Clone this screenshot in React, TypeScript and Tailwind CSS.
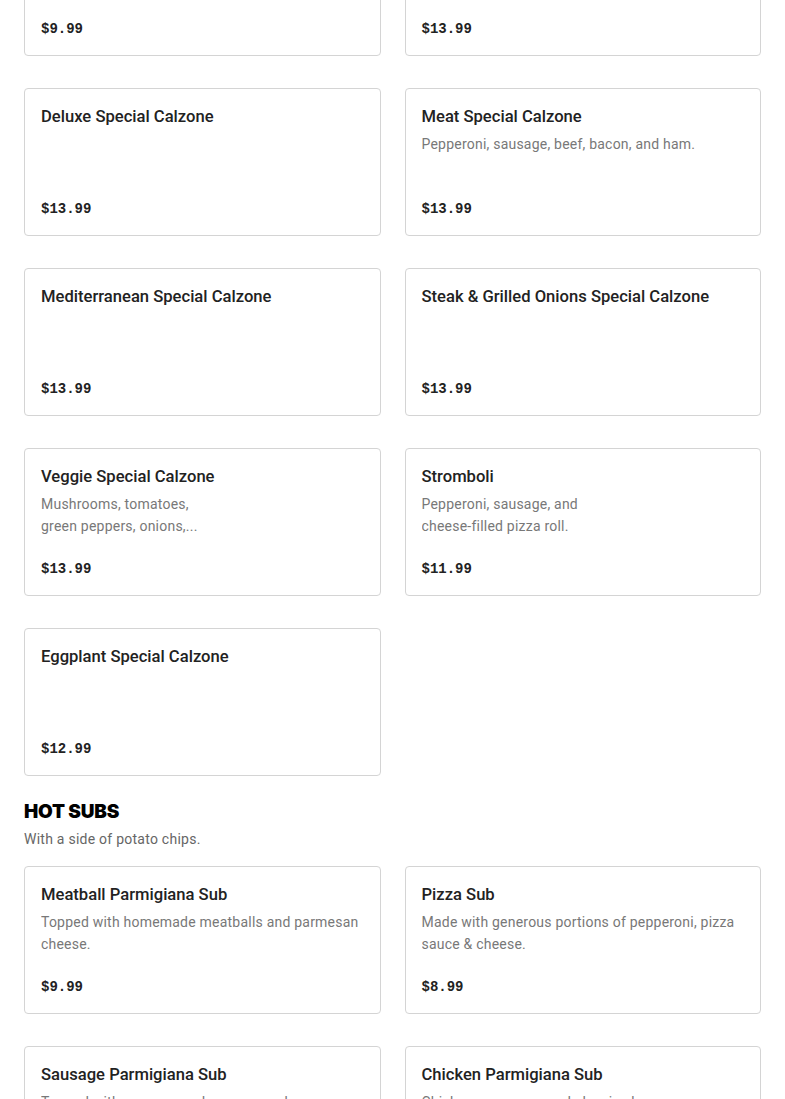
type Item = {
  name: string
  desc?: React.ReactNode
  price: string
}

const calzones: Item[] = [
  { name: "Cheese Calzone", desc: "Ricotta and mozzarella cheese.", price: "$9.99" },
  { name: "Chicken Special Calzone", price: "$13.99" },
  { name: "Deluxe Special Calzone", price: "$13.99" },
  { name: "Meat Special Calzone", desc: "Pepperoni, sausage, beef, bacon, and ham.", price: "$13.99" },
  { name: "Mediterranean Special Calzone", price: "$13.99" },
  { name: "Steak & Grilled Onions Special Calzone", price: "$13.99" },
  {
    name: "Veggie Special Calzone",
    desc: (
      <>
        Mushrooms, tomatoes,
        <br />
        green peppers, onions,...
      </>
    ),
    price: "$13.99",
  },
  {
    name: "Stromboli",
    desc: (
      <>
        Pepperoni, sausage, and
        <br />
        cheese-filled pizza roll.
      </>
    ),
    price: "$11.99",
  },
  { name: "Eggplant Special Calzone", price: "$12.99" },
]

const hotSubs: Item[] = [
  { name: "Meatball Parmigiana Sub", desc: "Topped with homemade meatballs and parmesan cheese.", price: "$9.99" },
  { name: "Pizza Sub", desc: "Made with generous portions of pepperoni, pizza sauce & cheese.", price: "$8.99" },
  { name: "Sausage Parmigiana Sub", desc: "Topped with sausage and parmesan cheese.", price: "$9.99" },
  { name: "Chicken Parmigiana Sub", desc: "Chicken parmesan, and classic cheese.", price: "$9.99" },
]

function MenuCard({ item }: { item: Item }) {
  return (
    <div className="h-[148px] rounded border border-[#d4d4d4] bg-white px-4 pt-4 pb-4 flex flex-col">
      <h3 className="text-[16.6px] leading-6 font-medium text-[#222]">{item.name}</h3>
      <p className="mt-1 h-[44px] text-[14px] leading-[22px] text-[#787878] tracking-[0.22px] overflow-hidden">{item.desc}</p>
      <div
        className="mt-auto text-[14px] leading-5 font-bold text-[#222]"
        style={{ fontFamily: "'Liberation Mono', 'DejaVu Sans Mono', monospace" }}
      >
        {item.price}
      </div>
    </div>
  )
}

export default function App() {
  return (
    <div className="min-h-screen bg-white overflow-hidden" style={{ fontFamily: "Roboto, 'Noto Sans', sans-serif" }}>
      <div className="px-6 -mt-[92px]">
        <div className="grid grid-cols-2 gap-x-6 gap-y-8">
          {calzones.map((item) => (
            <MenuCard key={item.name} item={item} />
          ))}
        </div>

        {/* Hot subs section */}
        <div className="mt-6">
          <h2
            className="text-[19px] leading-6 font-black text-black tracking-[-0.2px]"
            style={{ fontFamily: "Inter, sans-serif" }}
          >
            HOT SUBS
          </h2>
          <p className="mt-1 text-[14px] leading-[22px] text-[#666] tracking-[0.25px]">With a side of potato chips.</p>
        </div>
        <div className="mt-4 grid grid-cols-2 gap-x-6 gap-y-8">
          {hotSubs.map((item) => (
            <MenuCard key={item.name} item={item} />
          ))}
        </div>
      </div>
    </div>
  )
}
